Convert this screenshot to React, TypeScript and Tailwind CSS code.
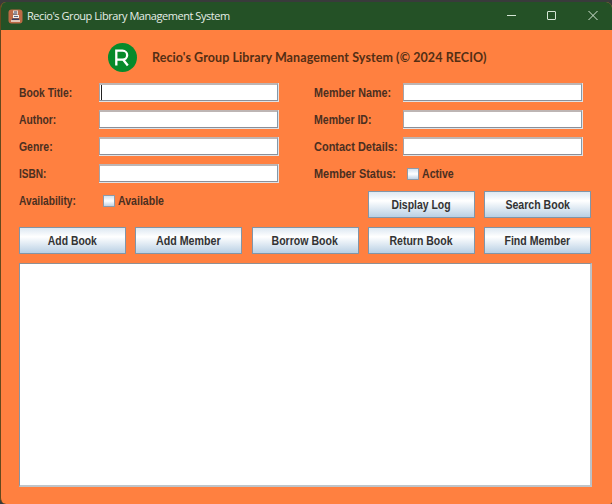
import React from "react";

const labelCls = "origin-left pt-px text-[12px] leading-[18px] font-bold text-[#4b2f20] whitespace-nowrap";

function TextField({ focused = false }: { focused?: boolean }) {
  return (
    <div className="h-[19px] w-[180px] shrink-0 border-r border-b border-[#dfe2e6]">
      <div className="h-[18px] w-[179px] border-t-2 border-l border-t-[#bdb5b4] border-l-[#a4a4a8] border-r border-b border-r-[#8499aa] border-b-[#8b8f98] bg-white pl-px">
        {focused && <div className="h-[15px] w-px bg-[#222]" />}
      </div>
    </div>
  );
}

function Check({ text, fit }: { text: string; fit: string }) {
  return (
    <div className="flex h-[19px] items-center gap-[3px] pl-1">
      <div className="h-[12px] w-[12px] border border-[#8d9aa8] bg-linear-to-b from-[#d3e2f0] via-white to-[#bfd3e6]" />
      <span className={labelCls + " " + fit}>{text}</span>
    </div>
  );
}

function Button({ text, fit }: { text: string; fit: string }) {
  return (
    <button className="flex h-[27px] w-[107px] items-center justify-center border border-[#8095a8] bg-linear-to-b from-[#dde8f2] via-white via-35% to-[#b9d0e4] pt-[2px] text-[12px] leading-[23px] font-bold whitespace-nowrap text-[#333]">
      <span className={"block " + fit}>{text}</span>
    </button>
  );
}

function Row({ label, fit, children }: { label: string; fit: string; children: React.ReactNode }) {
  return (
    <div className="flex h-[27px] items-start">
      <div className="w-0 grow">
        <span className={labelCls + " block w-max " + fit}>{label}</span>
      </div>
      {children}
    </div>
  );
}

function AppIcon() {
  return (
    <svg width="15" height="15" viewBox="0 0 15 15">
      <rect x="0.5" y="0.5" width="14" height="14" rx="3" fill="#bd6a45" />
      <path d="M5 1.5h5v4H5z" fill="#ead9cf" />
      <path d="M6 3h3M5 5h4" stroke="#3c4662" />
      <path d="M5 6h6v3H5z" fill="#f3f0e8" />
      <path d="M6 7.5h4" stroke="#59668a" />
      <path d="M4 9.5h7v1.5H4z" fill="#384062" />
      <path d="M3 12h9" stroke="#f1e6dc" strokeWidth="1.5" />
    </svg>
  );
}

export default function App() {
  return (
    <div className="h-[504px] w-[612px] overflow-hidden bg-[#393b3b] pt-[2px] font-['Liberation_Sans',Arial,sans-serif]">
      <div className="flex h-[502px] flex-col overflow-hidden rounded-[6px] rounded-br-[2px] border-l border-[#65481c] bg-[#ff8040]">
        <header className="flex h-[28px] shrink-0 items-center bg-[#245126] pl-[7px]">
          <AppIcon />
          <span className="ml-[4px] grow font-['Open_Sans',sans-serif] text-[11px] leading-4 tracking-[-0.45px] whitespace-nowrap text-[#e6eee6]">
            Recio's Group Library Management System
          </span>
          <svg className="shrink-0" width="106" height="26" viewBox="0 0 106 26" fill="none" stroke="#d5e5d5">
            <path d="M1 12.5h9" />
            <rect x="41.5" y="8.5" width="8" height="8" rx="0.5" />
            <path d="M82.5 8l9 9M91.5 8l-9 9" />
          </svg>
        </header>

        <div className="flex h-[53px] shrink-0 items-center pl-[107px] pt-[2px]">
          <svg width="29" height="29" viewBox="0 0 29 29">
            <circle cx="14.5" cy="14.5" r="14.5" fill="#078a2b" />
            <path d="M8.3 22.5V7.7h6.2a4.6 4.4 0 0 1 0 8.9H8.3M15 16.6l4.8 5.9" fill="none" stroke="#fff" strokeWidth="2.3" />
          </svg>
          <h1 className="ml-[15px] font-['Lato',sans-serif] text-[12.5px] leading-4 font-bold tracking-[0.09px] whitespace-nowrap text-[#532e14]">
            Recio's Group Library Management System (© 2024 RECIO)
          </h1>
        </div>

        <main className="flex flex-col pl-[18px]">
          <div className="flex h-[108px] gap-[35px]">
            <div className="w-[260px]">
              <Row label="Book Title:" fit="scale-x-[0.86]"><TextField focused /></Row>
              <Row label="Author:" fit="scale-x-[0.86]"><TextField /></Row>
              <Row label="Genre:" fit="scale-x-[0.87]"><TextField /></Row>
              <Row label="ISBN:" fit="scale-x-[0.84]"><TextField /></Row>
            </div>
            <div className="w-[269px]">
              <Row label="Member Name:" fit="scale-x-[0.895]"><TextField /></Row>
              <Row label="Member ID:" fit="scale-x-[0.88]"><TextField /></Row>
              <Row label="Contact Details:" fit="scale-x-[0.915]"><TextField /></Row>
              <Row label="Member Status:" fit="scale-x-[0.91]">
                <div className="w-[180px] shrink-0"><Check text="Active" fit="scale-x-[0.88]" /></div>
              </Row>
            </div>
          </div>
          <div className="flex h-[36px] w-[572px]">
            <div className="w-[80px]">
              <span className={labelCls + " block w-max scale-x-[0.85]"}>Availability:</span>
            </div>
            <div className="grow"><Check text="Available" fit="scale-x-[0.88]" /></div>
            <div className="flex w-[223px] justify-between">
              <Button text="Display Log" fit="scale-x-[0.87]" />
              <Button text="Search Book" fit="scale-x-[0.88]" />
            </div>
          </div>
          <div className="flex h-[36px] w-[572px] justify-between">
            <Button text="Add Book" fit="scale-x-[0.865]" />
            <Button text="Add Member" fit="scale-x-[0.89]" />
            <Button text="Borrow Book" fit="scale-x-[0.88]" />
            <Button text="Return Book" fit="scale-x-[0.875]" />
            <Button text="Find Member" fit="scale-x-[0.88]" />
          </div>
          <div className="h-[224px] w-[573px] border-t border-l border-r-2 border-b-2 border-t-[#8f8f92] border-l-[#8795a3] border-r-[#bcc1c7] border-b-[#bfc5ca] bg-white" />
        </main>
      </div>
    </div>
  );
}
